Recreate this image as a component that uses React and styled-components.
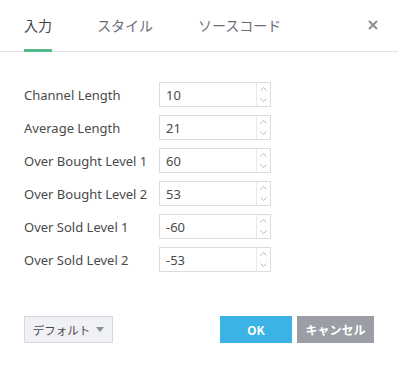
import React from 'react'
import styled, { createGlobalStyle } from 'styled-components'

const Global = createGlobalStyle`
  html, body {
    margin: 0;
    padding: 0;
    background: #fff;
  }
  body {
    font-family: "Noto Sans", "Noto Sans CJK JP", sans-serif;
    color: #4a4a4a;
  }
`

const Dialog = styled.div`
  width: 398px;
  height: 369px;
  display: flex;
  flex-direction: column;
  box-sizing: border-box;
`
const Header = styled.div`
  height: 52px;
  display: flex;
  align-items: stretch;
  padding: 0 20px 0 24px;
  border-bottom: 1px solid #e0e3eb;
  box-sizing: border-box;
`
const Tab = styled.div`
  display: flex;
  align-items: center;
  padding-top: 1px;
  margin-right: ${(p) => p.gap}px;
  font-family: "Noto Sans CJK JP", sans-serif;
  font-size: 14px;
  font-weight: 400;
  color: ${(p) => (p.active ? '#3f4248' : '#6a6d78')};
  border-bottom: 3px solid ${(p) => (p.active ? '#53b987' : 'transparent')};
  margin-bottom: -1px;
`
const Close = styled.div`
  margin-left: auto;
  display: flex;
  align-items: center;
  padding-bottom: 2px;
`
const Body = styled.div`
  padding: 30px 0 0 24px;
  display: flex;
  flex-direction: column;
  gap: 8px;
`
const Row = styled.div`
  display: flex;
  align-items: center;
  height: 25px;
`
const Label = styled.div`
  width: 135px;
  font-size: 13px;
  color: #4a4a4a;
`
const Input = styled.div`
  width: 112px;
  height: 25px;
  box-sizing: border-box;
  border: 1px solid #d9dce3;
  display: flex;
`
const Value = styled.div`
  flex: 1;
  display: flex;
  align-items: center;
  padding-left: 6px;
  font-size: 13px;
  color: #4a4a4a;
`
const Spin = styled.div`
  width: 13px;
  border-left: 1px solid #e6e8ee;
  display: flex;
  flex-direction: column;
`
const Arrow = styled.div`
  flex: 1;
  display: flex;
  align-items: center;
  justify-content: center;
`
const Footer = styled.div`
  margin-top: auto;
  height: 53px;
  display: flex;
  align-items: flex-start;
  padding: 0 24px;
`
const Default = styled.div`
  width: 89px;
  height: 27px;
  box-sizing: border-box;
  border: 1px solid #d5d8df;
  background: #f0f1f5;
  display: flex;
  align-items: center;
  justify-content: center;
  gap: 6px;
  font-family: "Noto Sans CJK JP", sans-serif;
  font-size: 11.5px;
  color: #4a4a4a;
`
const Caret = styled.span`
  width: 0;
  height: 0;
  border-left: 4px solid transparent;
  border-right: 4px solid transparent;
  border-top: 5px solid #8a8d96;
`
const Button = styled.div`
  height: 27px;
  width: ${(p) => p.w}px;
  margin-left: ${(p) => p.ml || 0}px;
  background: ${(p) => p.bg};
  color: #fff;
  display: flex;
  align-items: center;
  justify-content: center;
  font-family: "Noto Sans CJK JP", sans-serif;
  font-weight: bold;
  font-size: 12px;
`

const rows = [
  ['Channel Length', '10'],
  ['Average Length', '21'],
  ['Over Bought Level 1', '60'],
  ['Over Bought Level 2', '53'],
  ['Over Sold Level 1', '-60'],
  ['Over Sold Level 2', '-53'],
]

function Chevron({ up }) {
  return (
    <svg width="7" height="4" viewBox="0 0 7 4">
      <path
        d={up ? 'M0.5 3.5 L3.5 0.5 L6.5 3.5' : 'M0.5 0.5 L3.5 3.5 L6.5 0.5'}
        fill="none"
        stroke="#b4b8c2"
        strokeWidth="1"
      />
    </svg>
  )
}

export default function App() {
  return (
    <Dialog>
      <Global />
      <Header>
        <Tab active gap={45}>入力</Tab>
        <Tab gap={45}>スタイル</Tab>
        <Tab gap={0}>ソースコード</Tab>
        <Close>
          <svg width="10" height="10" viewBox="0 0 10 10">
            <path d="M1 1 L9 9 M9 1 L1 9" stroke="#8a8d96" strokeWidth="2" />
          </svg>
        </Close>
      </Header>
      <Body>
        {rows.map(([label, value]) => (
          <Row key={label}>
            <Label>{label}</Label>
            <Input>
              <Value>{value}</Value>
              <Spin>
                <Arrow><Chevron up /></Arrow>
                <Arrow><Chevron /></Arrow>
              </Spin>
            </Input>
          </Row>
        ))}
      </Body>
      <Footer>
        <Default>
          デフォルト <Caret />
        </Default>
        <Button w={72} bg="#3bb3e4" style={{ marginLeft: 'auto' }}>OK</Button>
        <Button w={77} ml={5} bg="#9b9ea5">キャンセル</Button>
      </Footer>
    </Dialog>
  )
}
